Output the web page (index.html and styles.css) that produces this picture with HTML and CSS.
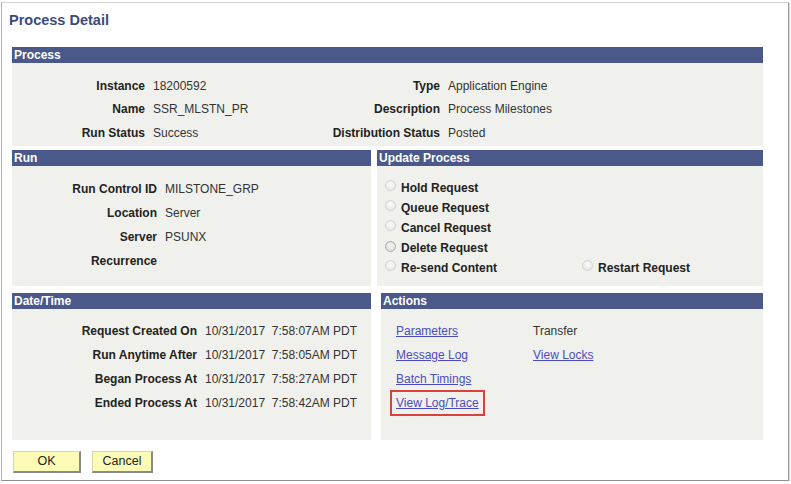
FILE: index.html
```html
<!DOCTYPE html>
<html>
<head>
<meta charset="utf-8">
<title>Process Detail</title>
<link rel="stylesheet" href="styles.css">
</head>
<body>
<div class="frame">
  <h1 class="title">Process Detail</h1>
  <div class="content">
    <section class="box">
      <div class="bar">Process</div>
      <div class="body process-grid">
        <span class="lbl">Instance</span><span class="val">18200592</span>
        <span class="lbl">Type</span><span class="val">Application Engine</span>
        <span class="lbl">Name</span><span class="val">SSR_MLSTN_PR</span>
        <span class="lbl">Description</span><span class="val">Process Milestones</span>
        <span class="lbl">Run Status</span><span class="val">Success</span>
        <span class="lbl">Distribution Status</span><span class="val">Posted</span>
      </div>
    </section>

    <div class="row row-a">
      <section class="box run">
        <div class="bar">Run</div>
        <div class="body run-grid">
          <span class="lbl">Run Control ID</span><span class="val">MILSTONE_GRP</span>
          <span class="lbl">Location</span><span class="val">Server</span>
          <span class="lbl">Server</span><span class="val">PSUNX</span>
          <span class="lbl">Recurrence</span><span class="val"></span>
        </div>
      </section>
      <section class="box update">
        <div class="bar">Update Process</div>
        <div class="body radio-grid">
          <label class="radio"><span class="dot"></span>Hold Request</label><span></span>
          <label class="radio"><span class="dot"></span>Queue Request</label><span></span>
          <label class="radio"><span class="dot"></span>Cancel Request</label><span></span>
          <label class="radio"><span class="dot dark"></span>Delete Request</label><span></span>
          <label class="radio"><span class="dot"></span>Re-send Content</label>
          <label class="radio"><span class="dot"></span>Restart Request</label>
        </div>
      </section>
    </div>

    <div class="row row-b">
      <section class="box datetime">
        <div class="bar">Date/Time</div>
        <div class="body date-grid">
          <span class="lbl">Request Created On</span><span class="val">10/31/2017&nbsp; 7:58:07AM PDT</span>
          <span class="lbl">Run Anytime After</span><span class="val">10/31/2017&nbsp; 7:58:05AM PDT</span>
          <span class="lbl">Began Process At</span><span class="val">10/31/2017&nbsp; 7:58:27AM PDT</span>
          <span class="lbl">Ended Process At</span><span class="val">10/31/2017&nbsp; 7:58:42AM PDT</span>
        </div>
      </section>
      <section class="box actions">
        <div class="bar">Actions</div>
        <div class="body action-grid">
          <a href="#" class="lnk">Parameters</a><span class="val">Transfer</span>
          <a href="#" class="lnk">Message Log</a><a href="#" class="lnk">View Locks</a>
          <a href="#" class="lnk">Batch Timings</a><span></span>
          <span><a href="#" class="lnk hl">View Log/Trace</a></span><span></span>
        </div>
      </section>
    </div>

    <div class="buttons">
      <button class="btn ok">OK</button>
      <button class="btn cancel">Cancel</button>
    </div>
  </div>
</div>
</body>
</html>
```

FILE: styles.css
```css
html, body {
  margin: 0;
  padding: 0;
  background: #ffffff;
}
body {
  font-family: "Liberation Sans", Arial, sans-serif;
  font-size: 12px;
  color: #333;
}
.frame {
  margin: 2px 0 0 1px;
  width: 788px;
  height: 479px;
  box-sizing: border-box;
  border: 1px solid #d4d4d4;
  border-right-color: #9a9a9a;
  border-bottom-color: #8f8f8f;
  border-left-color: #b0b0b0;
  box-shadow: 1px 1px 1px rgba(0,0,0,0.15);
  padding: 8px 0 0 10px;
  background: #fff;
}
.title {
  margin: 0 0 18px -3px;
  font-size: 14.5px;
  line-height: 18px;
  height: 18px;
  font-weight: bold;
  color: #3d4b7c;
}
.content {
  width: 751px;
}
.box {
  background: #f0f1ec;
}
.bar {
  background: #4a598a;
  color: #fff;
  font-weight: bold;
  font-size: 12px;
  height: 16px;
  line-height: 16px;
  padding-left: 2px;
}
.lbl {
  font-weight: bold;
  color: #222;
  text-align: right;
  white-space: nowrap;
}
.val {
  color: #333;
  white-space: nowrap;
}
.process-grid {
  display: grid;
  grid-template-columns: 133px 139px 140px 1fr;
  column-gap: 8px;
  grid-auto-rows: 23.5px;
  align-items: center;
  padding: 11px 0 1px;
}
.row {
  display: grid;
  margin-top: 4px;
}
.row-a {
  grid-template-columns: 359px 386px;
  column-gap: 6px;
}
.row-b {
  margin-top: 7px;
  grid-template-columns: 359px 382px;
  column-gap: 10px;
}
.run-grid {
  display: grid;
  grid-template-columns: 145px 1fr;
  column-gap: 8px;
  grid-auto-rows: 24px;
  align-items: center;
  padding: 11px 0 13px;
}
.radio-grid {
  display: grid;
  grid-template-columns: 197px 1fr;
  grid-auto-rows: 20px;
  align-items: center;
  padding: 12px 0 8px 8px;
}
.radio {
  display: flex;
  align-items: center;
  font-weight: bold;
  color: #222;
  white-space: nowrap;
}
.dot {
  width: 11px;
  height: 11px;
  border-radius: 50%;
  box-sizing: border-box;
  border: 1px solid #d2d2d2;
  background: radial-gradient(circle at 50% 40%, #fbfbfb 0%, #ececec 60%, #e0e0e0 100%);
  margin-right: 5px;
  margin-top: -4px;
}
.dot.dark {
  border-color: #a8a8a8;
  margin-top: -2px;
  background: radial-gradient(circle at 50% 40%, #f4f4f4 0%, #e2e2e2 70%, #d0d0d0 100%);
}
.date-grid {
  display: grid;
  grid-template-columns: 185px 1fr;
  column-gap: 8px;
  grid-auto-rows: 24px;
  align-items: center;
  padding: 10px 0 25px;
}
.action-grid {
  display: grid;
  grid-template-columns: 137px 1fr;
  grid-auto-rows: 24px;
  align-items: center;
  padding: 10px 0 25px 15px;
}
.lnk {
  color: #4b4bc2;
  text-decoration: underline;
  white-space: nowrap;
  justify-self: start;
}
.lnk.hl {
  display: inline-block;
  line-height: 14px;
  outline: 2px solid #d9433e;
  outline-offset: 4px;
}
.buttons {
  display: flex;
  gap: 11px;
  margin-top: 11px;
  padding-left: 1px;
}
.btn {
  font-family: "Liberation Sans", Arial, sans-serif;
  font-size: 12.5px;
  color: #222;
  background: #fcfcb6;
  height: 22px;
  padding: 0;
  border: 1px solid #d8d8a0;
  border-right: 2px solid #8a8a8a;
  border-bottom: 2px solid #8a8a8a;
  border-radius: 0;
}
.btn.ok { width: 68px; }
.btn.cancel { width: 61px; }
```
